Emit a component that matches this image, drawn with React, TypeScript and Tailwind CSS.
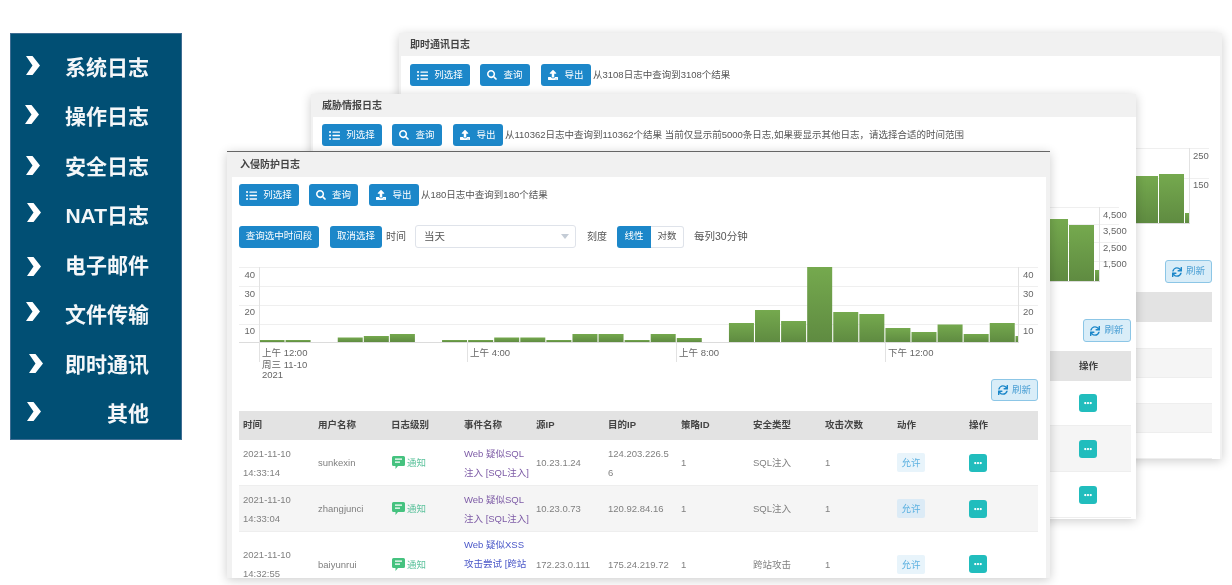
import React from 'react';
import { FaEllipsisH, FaListUl, FaSearch, FaSync, FaUpload } from 'react-icons/fa';

const sideItems = [
  { label: '系统日志', chevron: 'ml-[15px] -translate-y-[2px]' },
  { label: '操作日志', chevron: 'ml-[14px] -translate-y-[2px]' },
  { label: '安全日志', chevron: 'ml-[15px] -translate-y-[1px]' },
  { label: 'NAT日志', chevron: 'ml-[16px] -translate-y-[3px]' },
  { label: '电子邮件', chevron: 'ml-[16px] translate-y-[1px]' },
  { label: '文件传输', chevron: 'ml-[15px] -translate-y-[3px]' },
  { label: '即时通讯', chevron: 'ml-[18px] -translate-y-[1px]' },
  { label: '其他', chevron: 'ml-[16px] -translate-y-[2px]' },
];

const bars = [2, 2, 0, 4.5, 6, 8, 0, 2, 2, 4.5, 4.5, 2, 8, 8, 2, 8, 4, 0, 19, 32, 21, 75, 30, 28, 14, 10, 17.5, 8, 19];

const rows = [
  {
    time: ['2021-11-10', '14:33:14'],
    user: 'sunkexin',
    event: ['Web 疑似SQL', '注入 [SQL注入]'],
    link: 'text-[#7d5ba6]',
    src: '10.23.1.24',
    dst: ['124.203.226.5', '6'],
    kind: 'SQL注入',
    bg: 'h-[46px] bg-white',
    tag: 'bg-[#e8f4fb]',
  },
  {
    time: ['2021-11-10', '14:33:04'],
    user: 'zhangjunci',
    event: ['Web 疑似SQL', '注入 [SQL注入]'],
    link: 'text-[#7d5ba6]',
    src: '10.23.0.73',
    dst: ['120.92.84.16'],
    kind: 'SQL注入',
    bg: 'h-[46px] bg-[#f5f5f5]',
    tag: 'bg-[#dcebf6]',
  },
  {
    time: ['2021-11-10', '14:32:55'],
    user: 'baiyunrui',
    event: ['Web 疑似XSS', '攻击尝试 [跨站'],
    link: 'self-start pt-[3px] text-[#4a57c8]',
    src: '172.23.0.111',
    dst: ['175.24.219.72'],
    kind: '跨站攻击',
    bg: 'h-[65px] bg-white',
    tag: 'bg-[#e8f4fb]',
  },
];

const columns = ['时间', '用户名称', '日志级别', '事件名称', '源IP', '目的IP', '策略ID', '安全类型', '攻击次数', '动作', '操作'];
const tableGrid = 'grid grid-cols-[75px_73px_73px_72px_72px_73px_72px_72px_72px_72px_1fr] items-center';

const Chevron = ({ className }: { className: string }) => (
  <svg viewBox="0 0 14 19" className={`h-[19px] w-[14px] shrink-0 ${className}`}>
    <path d="M0 0H6.5L14 9.5L6.5 19H0L6.5 9.5Z" fill="#fff" />
  </svg>
);

const NoticeIcon = () => (
  <svg viewBox="0 0 13 13" className="h-[13px] w-[13px] shrink-0">
    <path d="M1.5 0H11.5A1.5 1.5 0 0 1 13 1.5V8.5A1.5 1.5 0 0 1 11.5 10H6L3.5 13V10H1.5A1.5 1.5 0 0 1 0 8.5V1.5A1.5 1.5 0 0 1 1.5 0Z" fill="#45c27f" />
    <path d="M3 3.2H10M3 6.2H8" stroke="#fff" strokeWidth="1.3" />
  </svg>
);

const Btn = ({ icon, label, width }: { icon: React.ReactNode; label: string; width: string }) => (
  <button className={`flex h-[22px] ${width} items-center justify-center gap-[6px] rounded-[3px] bg-[#1c87c9] text-[9.5px] text-white`}>
    {icon}
    {label}
  </button>
);

const Toolbar = ({ result, queryWidth }: { result: string; queryWidth: string }) => (
  <div className="flex items-center">
    <Btn icon={<FaListUl className="h-[11px] w-[11px]" />} label="列选择" width="w-[60px]" />
    <div className="ml-[10px]">
      <Btn icon={<FaSearch className="h-[10px] w-[10px]" />} label="查询" width={queryWidth} />
    </div>
    <div className="ml-[11px]">
      <Btn icon={<FaUpload className="h-[10px] w-[10px]" />} label="导出" width="w-[50px]" />
    </div>
    <span className="ml-[2px] whitespace-nowrap text-[9.5px] text-[#555]">{result}</span>
  </div>
);

const RefreshBtn = ({ size }: { size: string }) => (
  <button className={`ml-auto flex ${size} items-center justify-center gap-[4px] rounded-[3px] border border-[#8cc6e6] bg-[#d9edf8] text-[9.5px] text-[#4a9fd4]`}>
    <FaSync className="h-[10px] w-[10px] text-[#1c87c9]" />
    刷新
  </button>
);

const OpBtn = () => (
  <span className="flex h-[18px] w-[18px] items-center justify-center rounded-[3px] bg-[#21bdbd] text-white">
    <FaEllipsisH className="h-[8px] w-[8px]" />
  </span>
);

const BarDefs = ({ id }: { id: string }) => (
  <defs>
    <linearGradient id={id} x1="0" y1="0" x2="0" y2="1">
      <stop offset="0" stopColor="#75a94e" />
      <stop offset="1" stopColor="#5f8b41" />
    </linearGradient>
  </defs>
);

const MainChart = () => {
  const grid = [5, 24, 43, 62];
  const labels = [
    { y: 16, t: '40' },
    { y: 35, t: '30' },
    { y: 53, t: '20' },
    { y: 72, t: '10' },
  ];
  const ticks = [
    { x: 20, t: '上午 12:00' },
    { x: 228, t: '上午 4:00' },
    { x: 437, t: '上午 8:00' },
    { x: 646, t: '下午 12:00' },
  ];
  return (
    <svg width="799" height="117" className="mt-[14px] block overflow-visible text-[9.5px]" fill="#666">
      <BarDefs id="front-bar" />
      {grid.map((y) => (
        <line key={y} x1="0" x2="799" y1={y + 0.5} y2={y + 0.5} stroke="#efefef" />
      ))}
      {bars.map((h, i) =>
        h > 0 ? <rect key={i} x={20 + i * 26.08 + 0.5} y={80 - h} width={25} height={h} fill="url(#front-bar)" /> : null,
      )}
      <rect x="776.5" y="74" width="3" height="6" fill="url(#front-bar)" />
      <line x1="0" x2="780" y1="80.5" y2="80.5" stroke="#dcdcdc" />
      <line x1="20.5" x2="20.5" y1="5" y2="100" stroke="#e2e2e2" />
      <line x1="779.5" x2="779.5" y1="5" y2="80" stroke="#e2e2e2" />
      {labels.map((l) => (
        <g key={l.t}>
          <text x="16" y={l.y} textAnchor="end">{l.t}</text>
          <text x="784" y={l.y}>{l.t}</text>
        </g>
      ))}
      {ticks.map((t) => (
        <g key={t.x}>
          <line x1={t.x + 0.5} x2={t.x + 0.5} y1="80" y2="100" stroke="#e2e2e2" />
          <text x={t.x + 3} y="94">{t.t}</text>
        </g>
      ))}
      <text x="23" y="106">周三 11-10</text>
      <text x="23" y="116">2021</text>
    </svg>
  );
};

const IntrusionWindow = () => (
  <section className="absolute left-[227px] top-[151px] h-[427px] w-[823px] overflow-hidden border-t border-[#666] bg-[#f1f1f1] shadow-[0_2px_10px_rgba(0,0,0,0.2)]">
    <h3 className="flex h-[25px] items-center pl-[13px] text-[10px] font-bold text-[#444]">入侵防护日志</h3>
    <div className="ml-[5px] mr-[4px] h-full bg-white pl-[7px] pr-[8px] pt-[7px]">
      <Toolbar result="从180日志中查询到180个结果" queryWidth="w-[49px]" />
      <div className="mt-[19px] flex items-center text-[10px] text-[#555]">
        <button className="h-[22px] w-[80px] rounded-[3px] bg-[#1c87c9] text-[9.5px] text-white">查询选中时间段</button>
        <button className="ml-[11px] h-[22px] w-[52px] rounded-[3px] bg-[#1c87c9] text-[9.5px] text-white">取消选择</button>
        <span className="ml-[4px]">时间</span>
        <div className="ml-[9px] flex h-[23px] w-[161px] items-center justify-between rounded-[3px] border border-[#dfe3ea] pl-[8px] pr-[6px] text-[10.5px]">
          当天
          <span className="h-0 w-0 border-x-[4px] border-t-[5px] border-x-transparent border-t-[#c4ccd6]" />
        </div>
        <span className="ml-[11px]">刻度</span>
        <div className="ml-[10px] flex h-[22px] items-center text-[9.5px]">
          <span className="flex h-full w-[34px] items-center justify-center rounded-l-[3px] bg-[#1c87c9] text-white">线性</span>
          <span className="flex h-full w-[33px] items-center justify-center rounded-r-[3px] border border-l-0 border-[#dfe3ea]">对数</span>
        </div>
        <span className="ml-[10px] text-[10.5px]">每列30分钟</span>
      </div>
      <MainChart />
      <div className="flex">
        <RefreshBtn size="h-[22px] w-[47px]" />
      </div>
      <div className={`mt-[10px] h-[29px] bg-[#e3e3e3] text-[9.5px] font-bold text-[#444] ${tableGrid}`}>
        {columns.map((c) => (
          <span key={c} className="pl-[4px]">{c}</span>
        ))}
      </div>
      {rows.map((r) => (
        <div key={r.user} className={`${tableGrid} border-b border-[#eee] text-[9.5px] leading-[19px] text-[#808080] ${r.bg}`}>
          <div className="pl-[4px]">
            {r.time.map((t) => (
              <div key={t}>{t}</div>
            ))}
          </div>
          <div className="pl-[4px]">{r.user}</div>
          <div className="flex items-center gap-[2px] pl-[5px] text-[#5cc29c]">
            <NoticeIcon />
            通知
          </div>
          <div className={`whitespace-nowrap pl-[4px] ${r.link}`}>
            {r.event.map((t) => (
              <div key={t}>{t}</div>
            ))}
          </div>
          <div className="pl-[4px]">{r.src}</div>
          <div className="pl-[4px]">
            {r.dst.map((t) => (
              <div key={t}>{t}</div>
            ))}
          </div>
          <div className="pl-[4px]">1</div>
          <div className="pl-[4px]">{r.kind}</div>
          <div className="pl-[4px]">1</div>
          <div className="pl-[4px]">
            <span className={`flex h-[19px] w-[28px] items-center justify-center rounded-[2px] text-[#5bb0e0] ${r.tag}`}>允许</span>
          </div>
          <div className="pl-[4px]">
            <OpBtn />
          </div>
        </div>
      ))}
    </div>
  </section>
);

const ThreatWindow = () => (
  <section className="absolute left-[311px] top-[94px] h-[425px] w-[825px] overflow-hidden bg-[#f1f1f1] shadow-[0_2px_10px_rgba(0,0,0,0.2)]">
    <h3 className="flex h-[23px] items-center pl-[11px] text-[10px] font-bold text-[#444]">威胁情报日志</h3>
    <div className="ml-[2px] h-full bg-white pl-[9px] pr-[5px] pt-[7px]">
      <Toolbar result="从110362日志中查询到110362个结果 当前仅显示前5000条日志,如果要显示其他日志，请选择合适的时间范围" queryWidth="w-[50px]" />
      <svg width="92" height="90" className="ml-auto mt-[54px] block text-[9.5px]" fill="#666">
        <BarDefs id="mid-bar" />
        {[7, 24, 42, 61].map((y) => (
          <line key={y} x1="0" x2="80" y1={y + 0.5} y2={y + 0.5} stroke="#efefef" />
        ))}
        <rect x="0" y="19" width="29" height="62" fill="url(#mid-bar)" />
        <rect x="30" y="25" width="25" height="56" fill="url(#mid-bar)" />
        <rect x="56" y="70" width="4" height="11" fill="url(#mid-bar)" />
        <line x1="60.5" x2="60.5" y1="7" y2="81" stroke="#e2e2e2" />
        <line x1="0" x2="61" y1="81.5" y2="81.5" stroke="#dcdcdc" />
        <text x="64" y="18">4,500</text>
        <text x="64" y="34">3,500</text>
        <text x="64" y="51">2,500</text>
        <text x="64" y="67">1,500</text>
      </svg>
      <div className="mt-[29px] flex">
        <RefreshBtn size="h-[23px] w-[48px]" />
      </div>
      <div className="mt-[9px] flex h-[30px] items-center justify-end bg-[#e3e3e3] pr-[33px] text-[9.5px] font-bold text-[#444]">操作</div>
      {['h-[45px] bg-white', 'h-[46px] bg-[#f5f5f5]', 'h-[46px] bg-white'].map((row, i) => (
        <div key={i} className={`flex items-center justify-end border-b border-[#eee] pr-[34px] ${row}`}>
          <OpBtn />
        </div>
      ))}
    </div>
  </section>
);

const ChatWindow = () => (
  <section className="absolute left-[399px] top-[33px] h-[426px] w-[823px] overflow-hidden bg-[#f1f1f1] shadow-[0_2px_10px_rgba(0,0,0,0.2)]">
    <h3 className="flex h-[23px] items-center pl-[11px] text-[10px] font-bold text-[#444]">即时通讯日志</h3>
    <div className="ml-[2px] mr-[2px] h-full bg-white pl-[9px] pr-[8px] pt-[8px]">
      <Toolbar result="从3108日志中查询到3108个结果" queryWidth="w-[50px]" />
      <svg width="76" height="80" className="ml-auto mt-[62px] block text-[9.5px]" fill="#666">
        <BarDefs id="back-bar" />
        {[0, 30].map((y) => (
          <line key={y} x1="0" x2="73" y1={y + 0.5} y2={y + 0.5} stroke="#efefef" />
        ))}
        <rect x="0" y="28" width="22" height="47" fill="url(#back-bar)" />
        <rect x="23" y="26" width="25" height="49" fill="url(#back-bar)" />
        <rect x="49" y="65" width="4" height="10" fill="url(#back-bar)" />
        <line x1="53.5" x2="53.5" y1="0" y2="75" stroke="#e2e2e2" />
        <line x1="0" x2="54" y1="75.5" y2="75.5" stroke="#dcdcdc" />
        <text x="57" y="11">250</text>
        <text x="57" y="40">150</text>
      </svg>
      <div className="mt-[32px] flex">
        <RefreshBtn size="h-[23px] w-[47px]" />
      </div>
      <div className="mt-[9px] h-[30px] bg-[#e3e3e3]" />
      {['h-[27px] bg-white', 'h-[29px] bg-[#f5f5f5]', 'h-[26px] bg-white', 'h-[29px] bg-[#f5f5f5]', 'h-[26px] bg-white'].map((row, i) => (
        <div key={i} className={`border-b border-[#eee] ${row}`} />
      ))}
    </div>
  </section>
);

export default function App() {
  return (
    <div className="relative h-[585px] w-[1232px] overflow-hidden bg-white pl-[10px] pt-[33px] font-['Liberation_Sans','Noto_Sans_CJK_SC',sans-serif] blur-[0.45px]">
      <aside className="h-[407px] w-[172px] border border-[#3f6d92] bg-[#014f74] pt-[8.5px]">
        {sideItems.map((item) => (
          <div key={item.label} className="flex h-[49.5px] items-center pr-[32px]">
            <Chevron className={item.chevron} />
            <span className="ml-auto text-[21px] font-bold text-[#f4f7f9]">{item.label}</span>
          </div>
        ))}
      </aside>
      <ChatWindow />
      <ThreatWindow />
      <IntrusionWindow />
    </div>
  );
}
